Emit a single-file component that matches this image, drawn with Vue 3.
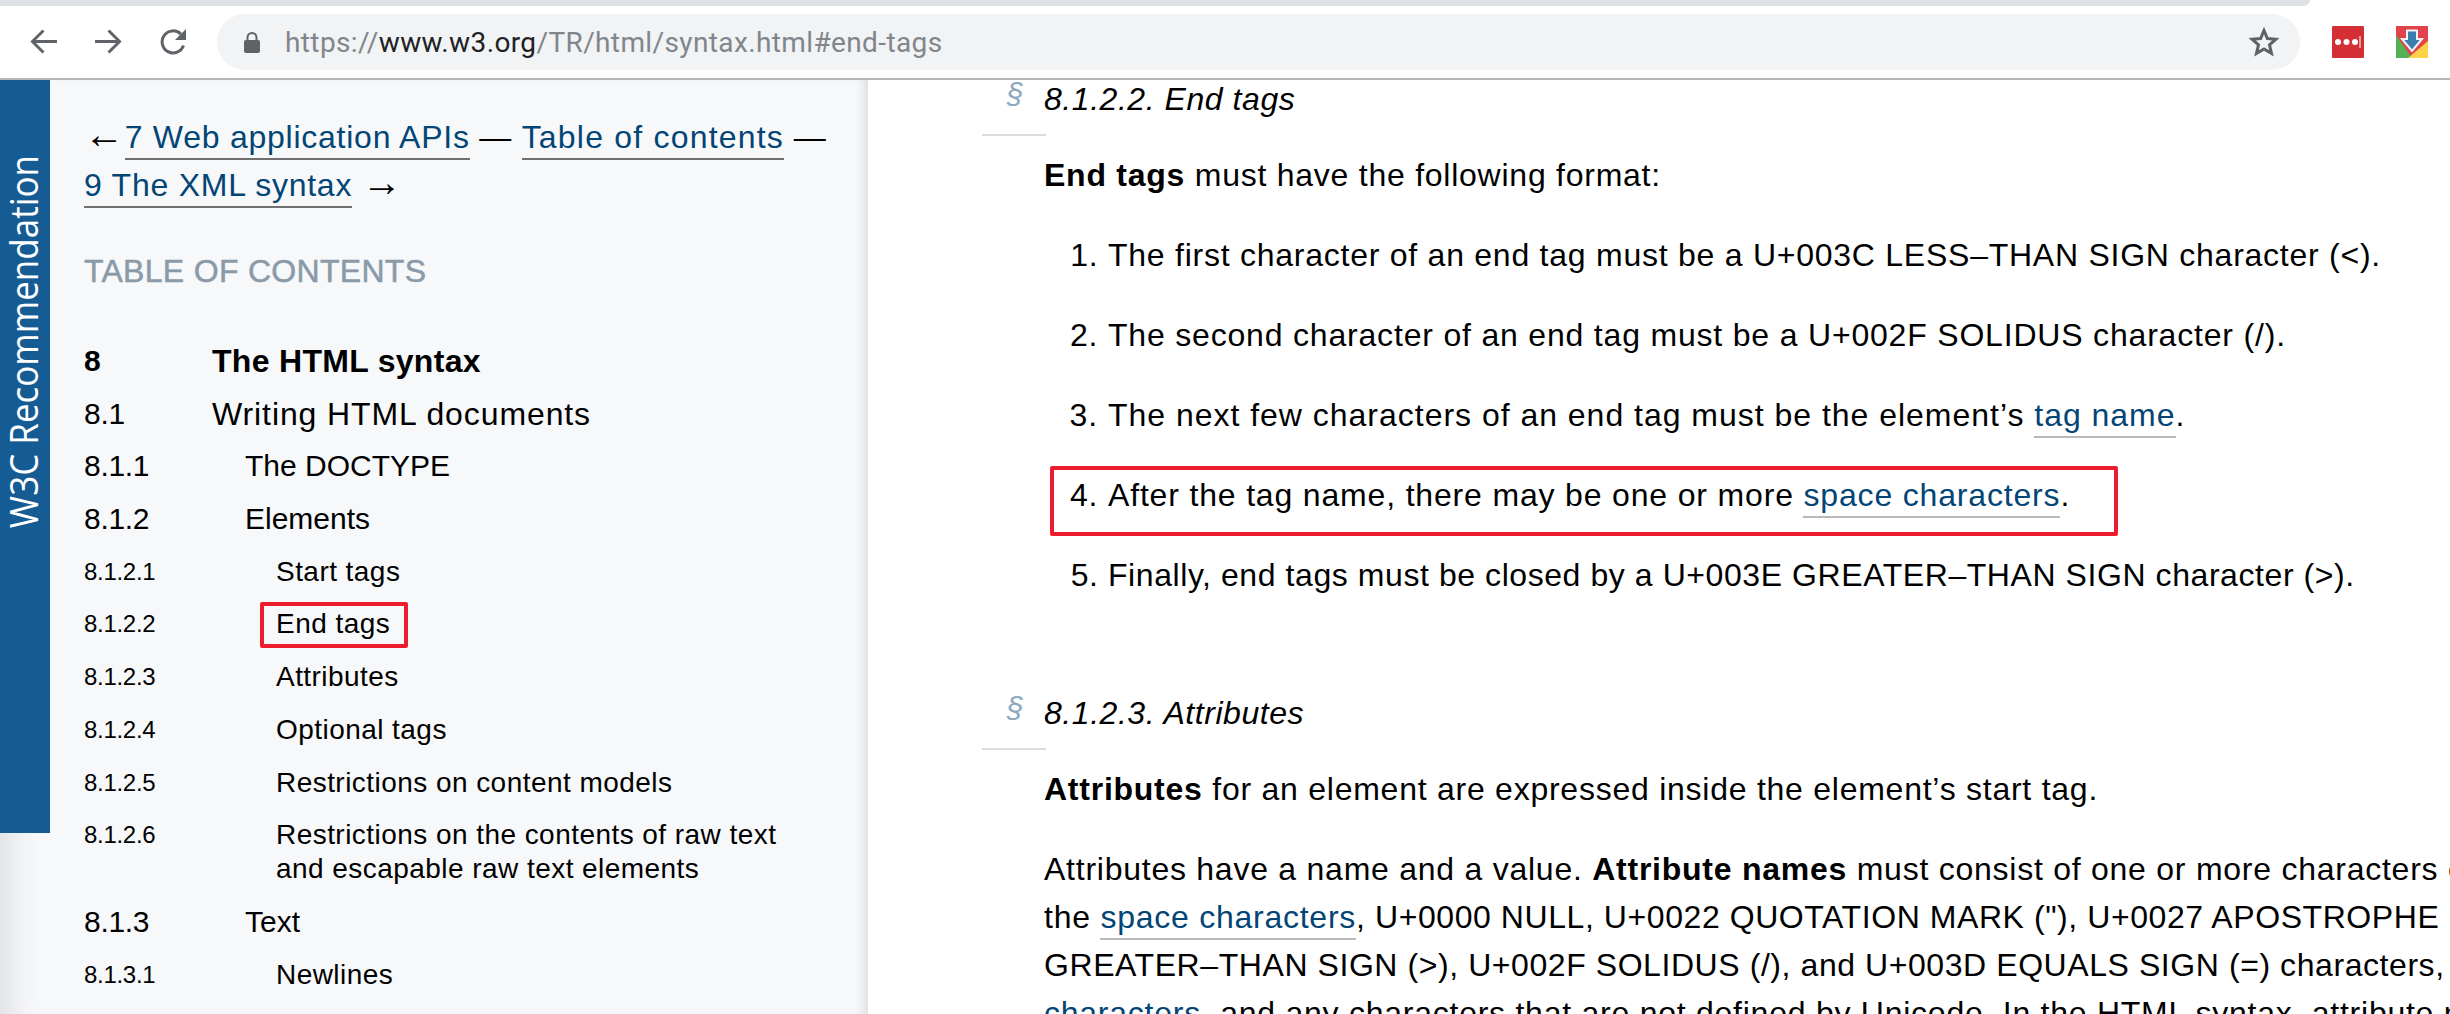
<script setup>
const toc = [
  { n: '8', t: 'The HTML syntax', cls: 'l1 strong' },
  { n: '8.1', t: 'Writing HTML documents', cls: 'l1' },
  { n: '8.1.1', t: 'The DOCTYPE', cls: 'l2' },
  { n: '8.1.2', t: 'Elements', cls: 'l2' },
  { n: '8.1.2.1', t: 'Start tags', cls: 'l3' },
  { n: '8.1.2.2', t: 'End tags', cls: 'l3 marked' },
  { n: '8.1.2.3', t: 'Attributes', cls: 'l3' },
  { n: '8.1.2.4', t: 'Optional tags', cls: 'l3' },
  { n: '8.1.2.5', t: 'Restrictions on content models', cls: 'l3' },
  { n: '8.1.2.6', t: 'Restrictions on the contents of raw text\nand escapable raw text elements', cls: 'l3' },
  { n: '8.1.3', t: 'Text', cls: 'l2' },
  { n: '8.1.3.1', t: 'Newlines', cls: 'l3' }
]
</script>

<template>
  <div class="page">
    <div class="tabstrip"><div class="tabfill"></div></div>
    <header class="toolbar">
      <svg class="nav back" viewBox="0 0 28 26" fill="none" stroke="#5f6368" stroke-width="3"><path d="M28 13H3M14 1.500 2.500 13 14 24.500"/></svg>
      <svg class="nav fwd" viewBox="0 0 28 26" fill="none" stroke="#5f6368" stroke-width="3"><path d="M0 13h25M14 1.500 25.500 13 14 24.500"/></svg>
      <svg class="nav reload" viewBox="0 0 28 28" fill="none"><path d="M24.500 17.500a11 11 0 1 1-2.600-11.400" stroke="#5f6368" stroke-width="3"/><path d="M27 1v11H16z" fill="#5f6368"/></svg>
      <div class="omnibox">
        <svg class="lock" viewBox="0 0 16 21"><path d="M3.500 9V5.500a4.500 4.500 0 0 1 9 0V9" fill="none" stroke="#5f6368" stroke-width="2"/><rect y="8" width="16" height="13" rx="2" fill="#5f6368"/></svg>
        <span class="url">https://<b>www.w3.org</b>/TR/html/syntax.html#end-tags</span>
        <svg class="star" viewBox="0 0 30 30"><path d="M15 3.500l3.400 8 8.600.7-6.500 5.700 2 8.500-7.500-4.500-7.500 4.500 2-8.500L3 12.200l8.600-.7z" fill="none" stroke="#5f6368" stroke-width="3"/></svg>
      </div>
      <svg class="ext lp" viewBox="0 0 32 32"><rect width="32" height="34" y="-1" rx="3" fill="#d32f35"/><circle cx="6" cy="16" r="3" fill="#fff"/><circle cx="14.500" cy="16" r="3" fill="#fff"/><circle cx="23" cy="16" r="3" fill="#fff"/><rect x="27.500" y="10" width="1" height="12" fill="#fff"/></svg>
      <svg class="ext dl" viewBox="0 0 32 32"><rect width="32" height="32" fill="#e2424a"/><path d="M0 9 16 32H0z" fill="#55b254"/><path d="M12 32 32 15v17z" fill="#fbd24a"/><path d="M11 4.500h10V13h5L16 25 6 13h5z" fill="#3c7db0" stroke="#eef3f6" stroke-width="2"/></svg>
    </header>

    <div class="content">
      <aside class="sidebar">
        <div class="badge"><span>W3C Recommendation</span></div>
        <p class="pager"><span class="arrow left">←</span> <a>7 Web application APIs</a> — <a class="toc-link">Table of contents</a> —<br><a>9 The XML syntax</a> <span class="arrow">→</span></p>
        <h2 class="toc-title">TABLE OF CONTENTS</h2>
        <ul class="toc">
          <li v-for="row in toc" :key="row.n" :class="row.cls">
            <span class="num">{{ row.n }}</span>
            <span class="title">{{ row.t }}</span>
          </li>
        </ul>
        <div class="mark side-mark"></div>
      </aside>

      <main class="doc">
        <h4 class="heading"><span class="sect">§</span>8.1.2.2. End tags</h4>
        <p class="after-head"><strong>End tags</strong> must have the following format:</p>
        <ol>
          <li>The first character of an end tag must be a U+003C LESS–THAN SIGN character (&lt;).</li>
          <li>The second character of an end tag must be a U+002F SOLIDUS character (/).</li>
          <li>The next few characters of an end tag must be the element’s <a>tag name</a>.</li>
          <li>After the tag name, there may be one or more <a>space characters</a>.</li>
          <li>Finally, end tags must be closed by a U+003E GREATER–THAN SIGN character (&gt;).</li>
        </ol>
        <h4 class="heading second"><span class="sect">§</span>8.1.2.3. Attributes</h4>
        <p class="after-head"><strong>Attributes</strong> for an element are expressed inside the element’s start tag.</p>
        <p class="long">Attributes have a name and a value. <strong>Attribute names</strong> must consist of one or more characters other than<br>the <a>space characters</a><span class="tight">, U+0000 NULL, U+0022 QUOTATION MARK ("), U+0027 APOSTROPHE (')</span><br><span class="tight">GREATER–THAN SIGN (&gt;), U+002F SOLIDUS (/), and U+003D EQUALS SIGN (=) characters, the control</span><br><a>characters</a>, and any characters that are not defined by Unicode. In the HTML syntax, attribute names</p>
        <div class="mark doc-mark"></div>
      </main>
    </div>
  </div>
</template>

<style>
html, body { margin: 0; overflow: hidden; background: #fff; }
</style>

<style scoped>
.page {
  width: 2450px;
  height: 1014px;
  overflow: hidden;
  display: flex;
  flex-direction: column;
  font-family: "Liberation Sans", Arial, sans-serif;
  color: #000;
}
.tabstrip { height: 6px; background: #fff; flex: none; }
.tabfill { width: 2310px; height: 6px; background: #dee1e6; border-bottom-right-radius: 8px; }
.toolbar {
  height: 74px;
  flex: none;
  box-sizing: border-box;
  border-bottom: 2px solid #b6b6b6;
  display: flex;
  align-items: flex-start;
  padding-left: 30px;
  background: #fff;
}
.nav { flex: none; width: 27px; height: 25px; margin-top: 23px; }
.fwd { margin-left: 38px; }
.reload { margin-left: 37px; width: 28px; height: 28px; margin-top: 22px; }
.omnibox {
  flex: none;
  box-sizing: border-box;
  margin: 8px 0 0 30px;
  width: 2083px;
  height: 56px;
  border-radius: 28px;
  background: #f1f3f4;
  display: flex;
  align-items: center;
  padding-left: 27px;
}
.lock { width: 16px; height: 21px; flex: none; }
.url { margin-left: 25px; font-size: 28px; letter-spacing: .38px; color: #80868b; font-family: Roboto, sans-serif; }
.url b { font-weight: 400; color: #202124; }
.star { width: 30px; height: 30px; margin-left: auto; margin-right: 21px; flex: none; }
.ext { flex: none; width: 32px; height: 32px; margin-top: 20px; }
.lp { margin-left: 32px; }
.dl { margin-left: 32px; }

.content { flex: 1; min-height: 0; display: grid; grid-template-columns: 868px 1fr; }
.sidebar {
  position: relative;
  box-sizing: border-box;
  background: #f7f8fa;
  padding: 33px 20px 0 84px;
  box-shadow: inset 34px 0 30px -24px #dddfe0, inset -12px 0 12px -9px #d8d9db;
  overflow: hidden;
  z-index: 1;
}
.badge {
  position: absolute;
  left: 0;
  top: 0;
  width: 50px;
  height: 753px;
  background: #155b94;
  color: #fff;
  display: flex;
  align-items: flex-start;
  justify-content: center;
}
.badge span {
  writing-mode: vertical-rl;
  transform: rotate(180deg) scaleX(1.12);
  font-family: "Open Sans", sans-serif;
  font-size: 35px;
  line-height: 50px;
  position: relative;
  top: 75px;
  left: -2px;
  white-space: nowrap;
}
.pager { margin: 0; font-size: 32px; letter-spacing: .75px; line-height: 48px; white-space: nowrap; }
.arrow { font-size: 40px; line-height: 1px; letter-spacing: 0; }
.arrow.left { margin-right: -9px; }
a { color: #034575; }
.pager a { border-bottom: 2px solid #707070; padding-bottom: 3px; }
.pager .toc-link { letter-spacing: 1.2px; }
.toc-title { margin: 38px 0 0; font-size: 32px; letter-spacing: .3px; line-height: 48px; font-weight: 400; color: #8a9aa8; -webkit-text-stroke: .5px #8a9aa8; }
.toc { list-style: none; margin: 49px 0 0; padding: 0; }
.toc li { display: flex; line-height: 34px; padding-bottom: 18.7px; font-size: 30px; }
.num { flex: none; letter-spacing: -.3px; }
.title { font-size: 32px; letter-spacing: .9px; white-space: pre-line; }
.strong .title { letter-spacing: .3px; }
.l1 .num { width: 128px; }
.l2 .num { width: 161px; }
.l2 .title { font-size: 30px; letter-spacing: 0; }
.l3 .num { width: 192px; font-size: 24px; }
.l3 .title { font-size: 28px; letter-spacing: .45px; }
.strong { font-weight: 700; }
.mark { position: absolute; box-sizing: border-box; border: 4px solid #ed1c2e; border-radius: 2px; }
.side-mark { left: 260px; top: 522px; width: 148px; height: 46px; }

.doc {
  position: relative;
  padding: 0 0 0 176px;
  font-size: 32px;
  letter-spacing: .75px;
  line-height: 48px;
  overflow: hidden;
}
.doc p { margin: 0; white-space: nowrap; }
.tight { letter-spacing: .57px; }
.heading {
  position: relative;
  margin: 0;
  font-size: 32px;
  font-weight: 400;
  font-style: italic;
  letter-spacing: .55px;
  line-height: 38px;
  padding: 0 0 18px;
  height: 38px;
}
.heading::after {
  content: "";
  position: absolute;
  left: -62px;
  width: 64px;
  bottom: 0;
  height: 2px;
  background: #ddd;
}
.sect { position: absolute; left: -37px; top: -5px; color: #8fa9c1; font-size: 30px; }
.doc p.after-head { margin-top: 15px; }
.doc ol { margin: 32px 0 0; padding: 0 0 0 64px; }
.doc li { height: 48px; margin-bottom: 32px; white-space: nowrap; }
.doc li:nth-child(2) { letter-spacing: .81px; }
.doc li:nth-child(3) { letter-spacing: .98px; }
.doc li:nth-child(4) { letter-spacing: .83px; }
.doc li:nth-child(5) { letter-spacing: .57px; }
.doc a { border-bottom: 2px solid #b9b9b9; padding-bottom: 3px; }
.second { margin-top: 95px; }
.doc p.long { margin-top: 32px; }
.doc-mark { left: 182px; top: 386px; width: 1068px; height: 70px; }
</style>
